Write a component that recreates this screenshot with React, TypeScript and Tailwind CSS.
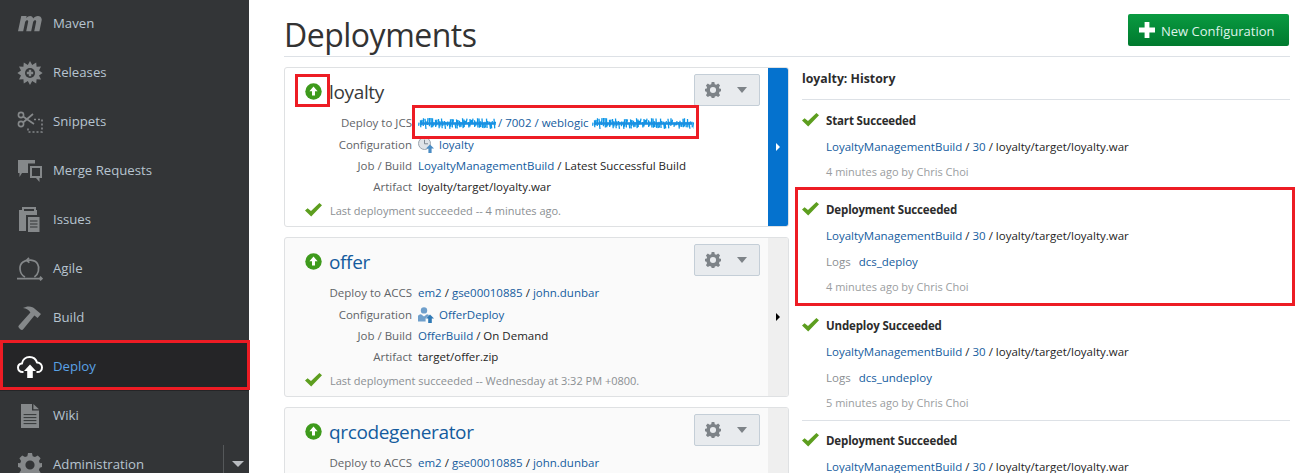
import { ReactNode } from 'react'

const GRAY = '#85888a'

function MavenIcon() {
  return (
    <svg width="24" height="17" viewBox="1 3.6 22.2 14.6">
      <path d="M1 18 L4 4 L9 4 L8.6 6 C10.4 3.6 14 3 15 6.2 C17 3.4 22.6 2.6 23 7.4 L20.8 18 L16 18 L17.8 9.2 C18 7.4 15.8 7.4 15 9.4 L13.2 18 L8.6 18 L10.4 9.2 C10.6 7.4 8.4 7.4 7.6 9.4 L5.8 18 Z" fill={GRAY} />
    </svg>
  )
}

function ReleasesIcon() {
  return (
    <svg width="26" height="26" viewBox="0 0 26 26">
      <path d="M13 1 L15.2 5 L19.2 2.6 L19.6 6.8 L24 6.6 L22 10.4 L25.6 13 L22 15.6 L24 19.4 L19.6 19.2 L19.2 23.4 L15.2 21 L13 25 L10.8 21 L6.8 23.4 L6.4 19.2 L2 19.4 L4 15.6 L.4 13 L4 10.4 L2 6.6 L6.4 6.8 L6.8 2.6 L10.8 5 Z" fill={GRAY} />
      <circle cx="13" cy="13" r="5" fill="#333537" />
      <path d="M11.8 9.8h2.4v2h2v2.4h-2v2h-2.4v-2h-2v-2.4h2z" fill={GRAY} />
    </svg>
  )
}

function SnippetsIcon() {
  return (
    <svg width="26" height="24" viewBox="0 0 26 24" fill="none" stroke={GRAY}>
      <circle cx="4" cy="5" r="2.6" strokeWidth="1.6" />
      <circle cx="4" cy="14" r="2.6" strokeWidth="1.6" />
      <path d="M6 6.5 L17 14 M6 12.5 L16 4" strokeWidth="1.7" />
      <path d="M17 9.5 H25 V22 H11 V17" strokeWidth="1.6" strokeDasharray="2 2" />
    </svg>
  )
}

function MergeIcon() {
  return (
    <svg width="26" height="24" viewBox="0 0 26 24">
      <path d="M1 1 H18 V4.5 H11 V14 H5 L2.5 18 V14 H1 Z" fill={GRAY} />
      <path d="M13 7 H25 V19 H22.5 V23 L19 19 H13 Z M15 9 V17 H23 V9 Z" fill={GRAY} fillRule="evenodd" />
    </svg>
  )
}

function IssuesIcon() {
  return (
    <svg width="22" height="26" viewBox="0 0 22 26">
      <path d="M0 3 H3 V0 H17 V3 H18 V8 H7 V24 H0 Z M5 2 V4 H15 V2 Z" fill={GRAY} fillRule="evenodd" />
      <path d="M9 10 H20.5 V25 H9 Z" fill={GRAY} />
      <path d="M11 14 H18.5 M11 17 H18.5 M11 20 H18.5" stroke="#333537" strokeWidth="1.1" />
    </svg>
  )
}

function AgileIcon() {
  return (
    <svg width="26" height="24" viewBox="0 0 26 24" fill="none" stroke={GRAY} strokeWidth="1.7">
      <path d="M8 20 C2 17 1.5 8 6 5 C10 2 18 2.4 20.6 7 C23 11 21.4 17.6 17.4 20" />
      <path d="M12 .8 L9.6 3.4 L12.4 5.6" />
      <path d="M0 21.6 H25 M23 19.6 L25 21.6 L23 23.4" />
    </svg>
  )
}

function BuildIcon() {
  return (
    <svg width="26" height="26" viewBox="0 0 26 26">
      <path d="M6 3 C10 .6 16 1 18 4 L24 9 L20.6 13 L17.4 10.4 L6 24.6 C4.6 25.6 2.4 24 1.4 22 C1.2 21.4 1.4 20.8 2 20.2 L13.4 7.6 C12 5 9.4 3.4 6 3 Z" fill={GRAY} />
    </svg>
  )
}

function DeployIcon() {
  return (
    <svg width="26" height="24" viewBox="0 0 26 24" fill="none">
      <path d="M6.5 17 H5.5 C2.8 17 1 15 1 12.6 C1 10.2 2.8 8.6 5 8.4 C5.6 4.6 8.8 2 12.6 2 C16.2 2 19 4.2 20 7.4 C23 7.6 25 9.8 25 12.4 C25 15 23 17 20.4 17 H19.5" stroke="#fff" strokeWidth="2" />
      <path d="M13 9.4 L19 16 H15.8 V23 H10.2 V16 H7 Z" fill="#fff" />
    </svg>
  )
}

function WikiIcon() {
  return (
    <svg width="18" height="24" viewBox="0 0 18 24">
      <path d="M0 0 H11 V6.6 H18 V24 H0 Z M12.4 0 L18 5.2 H12.4 Z" fill={GRAY} fillRule="evenodd" />
      <path d="M2.6 10.6 H15.4 M2.6 13.6 H15.4 M2.6 16.6 H15.4 M2.6 19.6 H15.4" stroke="#333537" strokeWidth="1" />
    </svg>
  )
}

function GearIcon({ size = 24, color = GRAY }: { size?: number; color?: string }) {
  return (
    <svg width={size} height={size} viewBox="0 0 24 24">
      <path
        d="M10 0 H14 L14.7 3.2 L17 4.1 L19.8 2.4 L22.6 5.2 L20.9 8 L21.8 10.3 L24 10 V14 L21.8 14.7 L20.9 17 L22.6 19.8 L19.8 22.6 L17 20.9 L14.7 21.8 L14 24 H10 L9.3 21.8 L7 20.9 L4.2 22.6 L1.4 19.8 L3.1 17 L2.2 14.7 L0 14 V10 L2.2 10.3 L3.1 8 L1.4 5.2 L4.2 2.4 L7 4.1 L9.3 3.2 Z M12 7.4 A4.6 4.6 0 1 0 12 16.6 A4.6 4.6 0 1 0 12 7.4 Z"
        fill={color}
        fillRule="evenodd"
      />
    </svg>
  )
}

function CheckIcon() {
  return (
    <svg width="17" height="14" viewBox="0 0 17 14" className="-mt-[2px]">
      <path d="M0 7.6 L2.6 5.2 L6 8 L14.4 0 L17 2.2 L6.2 13.4 Z" fill="#5d9e1f" />
    </svg>
  )
}

function UpCircle() {
  return (
    <svg width="17" height="17" viewBox="0 0 17 17">
      <circle cx="8.5" cy="8.5" r="8.2" fill="#3e9a1c" />
      <path d="M8.5 3.6 L12.6 8.2 H10 V12.6 H7 V8.2 H4.4 Z" fill="#fff" />
    </svg>
  )
}

function ConfigClockIcon() {
  return (
    <svg width="16" height="16" viewBox="0 0 16 16">
      <circle cx="6.5" cy="6.5" r="6" fill="#dfe3e8" stroke="#9aa3ad" />
      <path d="M6.5 2.8 V6.8 H10" stroke="#7e8892" fill="none" />
      <path d="M12 7.4 L16 11.4 H13.6 V16 H10.4 V11.4 H8 Z" fill="#4b8cc4" />
    </svg>
  )
}

function ConfigUserIcon() {
  return (
    <svg width="16" height="16" viewBox="0 0 16 16">
      <circle cx="6" cy="3.4" r="3.2" fill="#6f9fcb" />
      <path d="M0 14.6 V9.4 C0 8 1.4 7.4 3 7.2 L6 9.4 L9 7.2 C10 7.4 10.6 7.6 11 8.4 L7.6 11.6 V14.6 Z" fill="#6f9fcb" />
      <path d="M12 7.4 L16 11.4 H13.8 V16 H10.2 V11.4 H8 Z" fill="#2f79b5" />
    </svg>
  )
}

function Scribble({ width }: { width: number }) {
  // the address is smeared out in the source picture: short uneven strokes
  let d = ''
  for (let i = 1; i < width; i += 1.5) {
    const a = Math.abs(Math.sin(i * 12.9898) * 43758.5453) % 1
    const b = Math.abs(Math.sin(i * 78.233) * 12543.1234) % 1
    d += `M${i} ${2 + a * 5} L${i + (b - 0.5) * 2} ${8 + b * 5} `
  }
  return (
    <svg width={width} height="15" viewBox={`0 0 ${width} 15`} className="shrink-0">
      <path d={d} fill="none" stroke="#0d97e8" strokeWidth="1.3" />
      <path d={`M2 7.5 H${width - 2}`} stroke="#1b8fe0" strokeWidth="2.5" />
    </svg>
  )
}

const NAV: { label: string; icon: ReactNode; active?: boolean }[] = [
  { label: 'Maven', icon: <MavenIcon /> },
  { label: 'Releases', icon: <ReleasesIcon /> },
  { label: 'Snippets', icon: <SnippetsIcon /> },
  { label: 'Merge Requests', icon: <MergeIcon /> },
  { label: 'Issues', icon: <IssuesIcon /> },
  { label: 'Agile', icon: <AgileIcon /> },
  { label: 'Build', icon: <BuildIcon /> },
  { label: 'Deploy', icon: <DeployIcon />, active: true },
  { label: 'Wiki', icon: <WikiIcon /> },
]

function Sidebar() {
  return (
    <aside className="w-[249px] shrink-0 bg-[#333537] text-[13.2px]">
      <div className="-mt-[1px]">
        {NAV.map(n => (
          <div
            key={n.label}
            className={`relative flex h-[49px] items-center ${n.active ? 'bg-[#252527] text-[#5aa2e6]' : 'text-[#b7c4d0]'}`}
          >
            <span className="flex w-[53px] shrink-0 justify-center pl-[7px] pr-[1px]">{n.icon}</span>
            <span>{n.label}</span>
            {n.active && <span className="absolute -top-[2px] bottom-[1px] left-0 -right-[1px] border-[3px] border-[#ed1c24]" />}
          </div>
        ))}
        <div className="relative flex h-[49px] items-center text-[#b7c4d0]">
          <span className="flex w-[53px] shrink-0 justify-center pl-[7px] pr-[1px]"><GearIcon /></span>
          <span>Administration</span>
          <span className="ml-auto mr-[25px] mt-[-2px] h-[38px] border-l border-[#55585a]" />
          <span className="absolute right-[5px] top-[21px] h-0 w-0 border-x-[6px] border-t-[6px] border-x-transparent border-t-[#b9bcc0]" />
        </div>
      </div>
    </aside>
  )
}

function A({ children }: { children: ReactNode }) {
  return <span className="text-[#145c9e]">{children}</span>
}

function Row({ label, children }: { label: string; children: ReactNode }) {
  return (
    <div className="flex h-[21px] items-center first:h-[22px]">
      <div className="w-[127px] shrink-0 text-right text-[#5f6468]">{label}</div>
      <div className="ml-[6px] flex items-center whitespace-nowrap text-[#252525]">{children}</div>
    </div>
  )
}

function Card({
  name,
  selected,
  status,
  children,
}: {
  name: string
  selected?: boolean
  status?: string
  children: ReactNode
}) {
  return (
    <div className={`flex h-[160px] shrink-0 overflow-hidden rounded-[3px] border border-[#dfe1e3] ${selected ? 'bg-white' : 'bg-[#fafafa]'}`}>
      <div className="min-w-0 flex-1">
        <div className="flex h-[44px] items-start pl-[20px] pr-[8px]">
          <span className="mt-[15px]"><UpCircle /></span>
          <span className={`ml-[7px] mt-[8px] text-[19px] leading-[32px] tracking-[-0.35px] ${selected ? 'text-[#3a3a3a]' : 'text-[#145c9e]'}`}>{name}</span>
          <div className="ml-auto mt-[6px] flex h-[32px] w-[66px] items-center justify-between rounded-[2px] border border-[#c4ced7] bg-[#e8ebee] pl-[10px] pr-[12px]">
            <GearIcon size={16} color="#7d8388" />
            <span className="h-0 w-0 border-x-[5px] border-t-[6px] border-x-transparent border-t-[#7d8388]" />
          </div>
        </div>
        <div>{children}</div>
        {status && (
          <div className="mt-[3px] flex h-[22px] items-center pl-[20px] text-[11px] text-[#8b8f93]">
            <CheckIcon />
            <span className="ml-[8px]">{status}</span>
          </div>
        )}
      </div>
      <div className={`flex w-[20px] shrink-0 items-center justify-center ${selected ? 'bg-[#0572ce]' : 'bg-[#efefef]'}`}>
        <span className={`h-0 w-0 border-y-[4px] border-l-[4px] border-y-transparent ${selected ? 'border-l-white' : 'border-l-black'}`} />
      </div>
    </div>
  )
}

function Entry({
  title,
  logs,
  time,
  marked,
  last,
}: {
  title: string
  logs?: string
  time?: string
  marked?: boolean
  last?: boolean
}) {
  return (
    <div className={`relative ${last ? 'pt-[11px]' : 'border-b border-[#dde1e6] pt-[12px]'} ${logs ? 'h-[116px]' : 'h-[89px]'}`}>
      <div className="flex h-[18px] items-center">
        <span className="w-[24px] shrink-0"><CheckIcon /></span>
        <span className="font-bold tracking-[-0.15px] text-[#2c2c2c]">{title}</span>
      </div>
      <div className="ml-[24px] mt-[7px] h-[20px] leading-[20px] text-[#252525]">
        <A>LoyaltyManagementBuild</A> / <A>30</A> / loyalty/target/loyalty.war
      </div>
      {logs && (
        <div className="ml-[24px] mt-[6px] h-[20px] leading-[20px]">
          <span className="mr-[8px] text-[#8b8f93]">Logs</span>
          <A>{logs}</A>
        </div>
      )}
      {time && <div className="ml-[24px] mt-[5px] h-[20px] text-[11px] leading-[20px] text-[#9a9da0]">{time}</div>}
      {marked && <span className="absolute -left-[7px] -right-[5px] top-[-2px] bottom-[-2px] border-[3px] border-[#ed1c24]" />}
    </div>
  )
}

export default function App() {
  return (
    <div className="flex h-[473px] w-[1312px] overflow-hidden bg-white font-['Open_Sans','Noto_Sans',sans-serif] text-[11.5px]">
      <Sidebar />
      <main className="ml-[35px] mr-[22px] min-w-0 flex-1">
        <header className="flex h-[57px] items-start justify-between border-b border-[#dde1e6]">
          <h1 className="mt-[12px] text-[32px] leading-[46px] tracking-[-0.5px] text-[#333]">Deployments</h1>
          <button className="mr-[1px] mt-[14px] flex h-[32px] w-[161px] items-center rounded-[2px] bg-gradient-to-b from-[#0a9a41] to-[#007a2e] pl-[11px] text-[13px] text-[#dff3ea]">
            <svg width="16" height="16" viewBox="0 0 16 16"><path d="M5.6 0 H10.4 V5.6 H16 V10.4 H10.4 V16 H5.6 V10.4 H0 V5.6 H5.6 Z" fill="#fff" /></svg>
            <span className="ml-[6px] mt-[3px]">New Configuration</span>
          </button>
        </header>
        <div className="flex">
          <section className="mt-[10px] flex w-[505px] shrink-0 flex-col gap-[10px]">
            <div className="relative">
              <Card name="loyalty" selected status="Last deployment succeeded -- 4 minutes ago.">
                <Row label="Deploy to JCS">
                  <Scribble width={79} />
                  <span className="ml-[1px] text-[#145c9e]">/ 7002 / weblogic&nbsp;</span>
                  <Scribble width={102} />
                </Row>
                <Row label="Configuration"><ConfigClockIcon /><span className="ml-[5px]"><A>loyalty</A></span></Row>
                <Row label="Job / Build"><A>LoyaltyManagementBuild</A>&nbsp;/ Latest Successful Build</Row>
                <Row label="Artifact">loyalty/target/loyalty.war</Row>
              </Card>
              <span className="absolute left-[11px] top-[7px] h-[33px] w-[35px] border-[3px] border-[#ed1c24]" />
              <span className="absolute left-[128px] top-[38px] h-[34px] w-[287px] border-[3px] border-[#ed1c24]" />
            </div>
            <Card name="offer" status="Last deployment succeeded -- Wednesday at 3:32 PM +0800.">
              <Row label="Deploy to ACCS"><A>em2</A>&nbsp;/&nbsp;<A>gse00010885</A>&nbsp;/&nbsp;<A>john.dunbar</A></Row>
              <Row label="Configuration"><ConfigUserIcon /><span className="ml-[5px]"><A>OfferDeploy</A></span></Row>
              <Row label="Job / Build"><A>OfferBuild</A>&nbsp;/ On Demand</Row>
              <Row label="Artifact">target/offer.zip</Row>
            </Card>
            <Card name="qrcodegenerator">
              <Row label="Deploy to ACCS"><A>em2</A>&nbsp;/&nbsp;<A>gse00010885</A>&nbsp;/&nbsp;<A>john.dunbar</A></Row>
            </Card>
          </section>
          <section className="ml-[13px] min-w-0 flex-1">
            <div className="flex h-[43px] items-center border-b border-[#dde1e6] pt-[2px] text-[12.3px] font-bold text-[#2c2c2c]">loyalty: History</div>
            <Entry title="Start Succeeded" time="4 minutes ago by Chris Choi" />
            <Entry title="Deployment Succeeded" logs="dcs_deploy" time="4 minutes ago by Chris Choi" marked />
            <Entry title="Undeploy Succeeded" logs="dcs_undeploy" time="5 minutes ago by Chris Choi" />
            <Entry title="Deployment Succeeded" last />
          </section>
        </div>
      </main>
    </div>
  )
}
